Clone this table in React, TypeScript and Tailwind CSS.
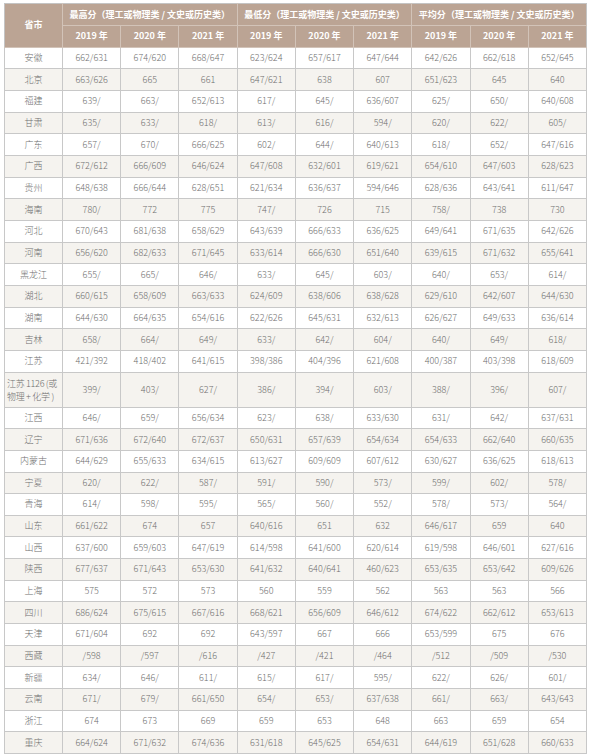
const groups = ["最高分", "最低分", "平均分"]
const years = ["2019 年", "2020 年", "2021 年"]

const rows: [string, string[]][] = [
  ["安徽", ["662/631", "674/620", "668/647", "623/624", "657/617", "647/644", "642/626", "662/618", "652/645"]],
  ["北京", ["663/626", "665", "661", "647/621", "638", "607", "651/623", "645", "640"]],
  ["福建", ["639/", "663/", "652/613", "617/", "645/", "636/607", "625/", "650/", "640/608"]],
  ["甘肃", ["635/", "633/", "618/", "613/", "616/", "594/", "620/", "622/", "605/"]],
  ["广东", ["657/", "670/", "666/625", "602/", "644/", "640/613", "618/", "652/", "647/616"]],
  ["广西", ["672/612", "666/609", "646/624", "647/608", "632/601", "619/621", "654/610", "647/603", "628/623"]],
  ["贵州", ["648/638", "666/644", "628/651", "621/634", "636/637", "594/646", "628/636", "643/641", "611/647"]],
  ["海南", ["780/", "772", "775", "747/", "726", "715", "758/", "738", "730"]],
  ["河北", ["670/643", "681/638", "658/629", "643/639", "666/633", "636/625", "649/641", "671/635", "642/626"]],
  ["河南", ["656/620", "682/633", "671/645", "633/614", "666/630", "651/640", "639/615", "671/632", "655/641"]],
  ["黑龙江", ["655/", "665/", "646/", "633/", "645/", "603/", "640/", "653/", "614/"]],
  ["湖北", ["660/615", "658/609", "663/633", "624/609", "638/606", "638/628", "629/610", "642/607", "644/630"]],
  ["湖南", ["644/630", "664/635", "654/616", "622/626", "645/631", "632/613", "626/627", "649/633", "636/614"]],
  ["吉林", ["658/", "664/", "649/", "633/", "642/", "604/", "640/", "649/", "618/"]],
  ["江苏", ["421/392", "418/402", "641/615", "398/386", "404/396", "621/608", "400/387", "403/398", "618/609"]],
  ["江苏1126", ["399/", "403/", "627/", "386/", "394/", "603/", "388/", "396/", "607/"]],
  ["江西", ["646/", "659/", "656/634", "623/", "638/", "633/630", "631/", "642/", "637/631"]],
  ["辽宁", ["671/636", "672/640", "672/637", "650/631", "657/639", "654/634", "654/633", "662/640", "660/635"]],
  ["内蒙古", ["644/629", "655/633", "634/615", "613/627", "609/609", "607/612", "630/627", "636/625", "618/613"]],
  ["宁夏", ["620/", "622/", "587/", "591/", "590/", "573/", "599/", "602/", "578/"]],
  ["青海", ["614/", "598/", "595/", "565/", "560/", "552/", "578/", "573/", "564/"]],
  ["山东", ["661/622", "674", "657", "640/616", "651", "632", "646/617", "659", "640"]],
  ["山西", ["637/600", "659/603", "647/619", "614/598", "641/600", "620/614", "619/598", "646/601", "627/616"]],
  ["陕西", ["677/637", "671/643", "653/630", "641/632", "640/641", "460/623", "653/635", "653/642", "609/626"]],
  ["上海", ["575", "572", "573", "560", "559", "562", "563", "563", "566"]],
  ["四川", ["686/624", "675/615", "667/616", "668/621", "656/609", "646/612", "674/622", "662/612", "653/613"]],
  ["天津", ["671/604", "692", "692", "643/597", "667", "666", "653/599", "675", "676"]],
  ["西藏", ["/598", "/597", "/616", "/427", "/421", "/464", "/512", "/509", "/530"]],
  ["新疆", ["634/", "646/", "611/", "615/", "617/", "595/", "622/", "626/", "601/"]],
  ["云南", ["671/", "679/", "661/650", "654/", "653/", "637/638", "661/", "663/", "643/643"]],
  ["浙江", ["674", "673", "669", "659", "653", "648", "663", "659", "654"]],
  ["重庆", ["664/624", "671/632", "674/636", "631/618", "645/625", "654/631", "644/619", "651/628", "660/633"]],
]

export default function App() {
  return (
    <div
      className="w-[590px] h-[756px] bg-white pt-[3px] pl-[4px]"
      style={{ fontFamily: '"Noto Sans CJK SC", "Noto Sans", sans-serif' }}
    >
      <table className="table-fixed border-collapse w-[583px] text-[9px] leading-[12px]">
        <colgroup>
          <col className="w-[58px]" />
          {Array.from({ length: 9 }).map((_, i) => (
            <col key={i} />
          ))}
        </colgroup>
        <thead>
          <tr className="h-[22px] bg-[#bba494] text-white font-bold">
            <th rowSpan={2} className="border border-[#d2c3b8] border-l-[#c4c4c4] border-t-[#c4c4c4]">
              省市
            </th>
            {groups.map((g) => (
              <th key={g} colSpan={3} className="border border-[#d2c3b8] border-t-[#c4c4c4] last:border-r-[#c4c4c4] whitespace-nowrap">
                {g}（理工或物理类 / 文史或历史类）
              </th>
            ))}
          </tr>
          <tr className="h-[21.7px] bg-[#bba494] text-white font-bold">
            {groups.flatMap((g) =>
              years.map((y) => (
                <th key={g + y} className="border border-[#d2c3b8] last:border-r-[#c4c4c4]">
                  {y}
                </th>
              ))
            )}
          </tr>
        </thead>
        <tbody className="text-[#6e6e6e] font-light">
          {rows.map(([name, vals], i) => (
            <tr
              key={name}
              className={`${name === "江苏1126" ? "h-[35px]" : "h-[21.67px]"} ${i % 2 === 1 ? "bg-[#f5f3ef]" : "bg-white"}`}
            >
              <td className={`border border-[#c8c8c8] text-center ${name === "江苏1126" ? "px-0" : "px-[1px]"}`}>
                {name === "江苏1126" ? (
                  <span className="block text-left leading-[13px] whitespace-nowrap tracking-[-0.3px] pl-[2px]">
                    江苏 1126 (或
                    <br />
                    物理 + 化学 )
                  </span>
                ) : (
                  name
                )}
              </td>
              {vals.map((v, j) => (
                <td key={j} className="border border-[#c8c8c8] text-center">
                  {v}
                </td>
              ))}
            </tr>
          ))}
        </tbody>
      </table>
    </div>
  )
}
